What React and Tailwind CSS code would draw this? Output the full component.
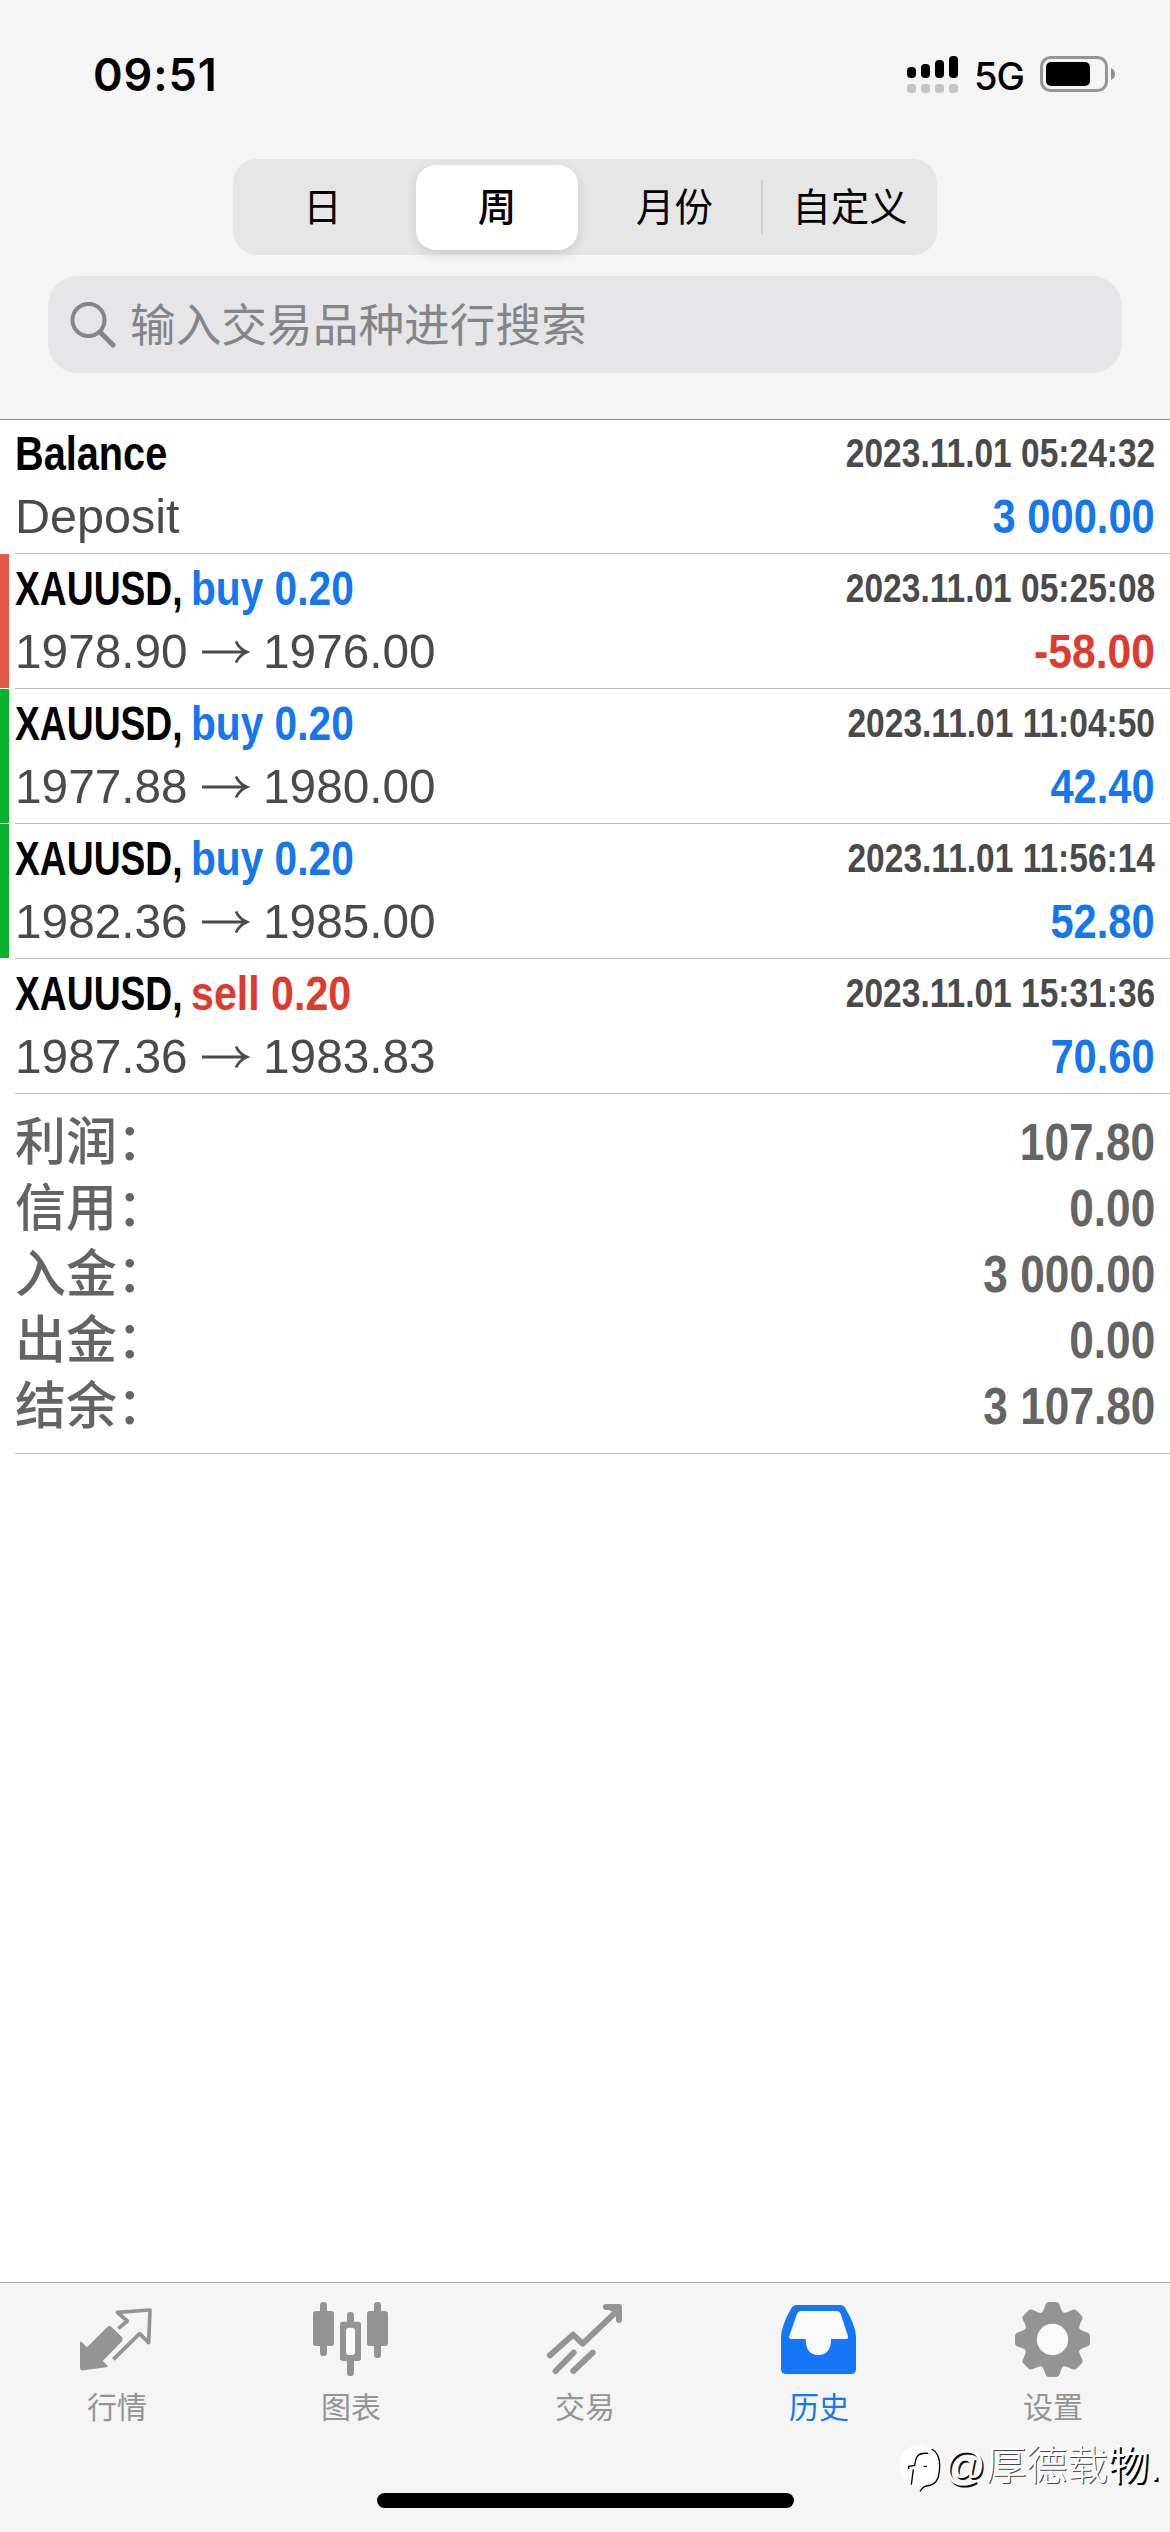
const TABS = ['日', '周', '月份', '自定义'];

const DEALS = [
  { symbol: 'Balance', symbolScale: 'scale-x-[0.81]', detail: 'Deposit', time: '2023.11.01 05:24:32', amount: '3 000.00' },
  { symbol: 'XAUUSD,', side: 'buy', volume: '0.20', open: '1978.90', close: '1976.00', time: '2023.11.01 05:25:08', amount: '-58.00', bar: 'bg-[#e2594c]' },
  { symbol: 'XAUUSD,', side: 'buy', volume: '0.20', open: '1977.88', close: '1980.00', time: '2023.11.01 11:04:50', amount: '42.40', bar: 'bg-[#0bb22d]' },
  { symbol: 'XAUUSD,', side: 'buy', volume: '0.20', open: '1982.36', close: '1985.00', time: '2023.11.01 11:56:14', amount: '52.80', bar: 'bg-[#0bb22d]' },
  { symbol: 'XAUUSD,', side: 'sell', volume: '0.20', open: '1987.36', close: '1983.83', time: '2023.11.01 15:31:36', amount: '70.60' },
];

const SUMMARY = [
  { label: '利润：', value: '107.80' },
  { label: '信用：', value: '0.00' },
  { label: '入金：', value: '3 000.00' },
  { label: '出金：', value: '0.00' },
  { label: '结余：', value: '3 107.80' },
];

const StatusBar = () => (
  <div className="flex h-[159px] items-start justify-between pl-[93px] pr-[53px] pt-[47px]">
    <span className="font-['Inter'] text-[45px] font-semibold leading-[55px] tracking-[0.9px]">09:51</span>
    <div className="flex items-start pt-[9px]">
      <svg className="h-[38px] w-[52px]" viewBox="0 0 52 38">
        <rect x="0" y="11" width="9" height="11" rx="4" />
        <rect x="14" y="8" width="9" height="14" rx="4" />
        <rect x="28" y="4" width="9" height="18" rx="4" />
        <rect x="42" y="0" width="9" height="22" rx="4" />
        {[0, 14, 28, 42].map((x) => (
          <rect key={x} x={x} y="28" width="9" height="9" rx="3" fill="#c4c4c4" />
        ))}
      </svg>
      <span className="ml-[15px] w-[66px] font-['Inter'] text-[38px] font-medium leading-[40px] tracking-[-1px]">5G</span>
      <svg className="h-[38px] w-[77px]" viewBox="0 0 77 38">
        <rect x="1.5" y="1.5" width="65" height="33" rx="9" fill="none" stroke="#959595" strokeWidth="3" />
        <rect x="6" y="6" width="44" height="24" rx="5" />
        <path d="M71 12q4 2 4 6t-4 6z" fill="#8e8e8e" />
      </svg>
    </div>
  </div>
);

const PeriodTabs = () => (
  <div className="mx-auto flex h-[96px] w-[704px] items-center rounded-[24px] bg-[#e6e6e7] text-[38.5px]">
    {TABS.map((tab, index) => (
      <div key={tab} className="flex h-full w-[176px] items-center justify-center">
        {index === 1 ? (
          <div className="flex h-[85px] w-[162px] items-center justify-center rounded-[20px] bg-white pt-[2px] font-medium shadow-[0_4px_12px_rgba(0,0,0,0.12)]">
            {tab}
          </div>
        ) : (
          <div
            className={
              index === 3
                ? 'flex h-[54px] w-full items-center justify-center border-l-2 border-[#d0d0d2] pt-[2px]'
                : 'flex h-[54px] items-center justify-center pt-[2px] pl-[3px]'
            }
          >
            {tab}
          </div>
        )}
      </div>
    ))}
  </div>
);

const SearchField = () => (
  <div className="mx-[48px] mt-[21px] flex h-[97px] items-center rounded-[30px] bg-[#e6e6e8] pl-[22px] text-[#858589]">
    <svg className="h-[46px] w-[46px]" viewBox="0 0 46 46" fill="none" stroke="currentColor" strokeWidth="4">
      <circle cx="18.5" cy="18" r="16" />
      <path d="M30 30l13 13" strokeWidth="5" strokeLinecap="round" />
    </svg>
    <span className="ml-[14px] pt-[5px] text-[45.7px] leading-[60px]">输入交易品种进行搜索</span>
  </div>
);

const DealRow = ({ deal }) => (
  <div className="flex h-[135px]">
    <div className="h-[134px] w-[15px]">
      {deal.bar && <div className={`h-full w-[9px] ${deal.bar}`} />}
    </div>
    <div className="flex-1 border-b border-[#bfbfc1] pt-[3px] pr-[15px] text-[49px] leading-[63px] text-[#4a4a4c]">
      <div className="flex h-[63px] justify-between whitespace-nowrap font-bold">
        <div className="flex">
          <span className="w-[176px] text-black">
            <span className={`inline-block origin-left ${deal.symbolScale || 'scale-x-[0.76]'}`}>{deal.symbol}</span>
          </span>
          {deal.side === 'buy' && (
            <span className="inline-block origin-left scale-x-[0.83] text-[#1577ee]">buy {deal.volume}</span>
          )}
          {deal.side === 'sell' && (
            <span className="inline-block origin-left scale-x-[0.84] text-[#dc3b2e]">sell {deal.volume}</span>
          )}
        </div>
        <span className="inline-block origin-right scale-x-[0.838] text-[40px]">{deal.time}</span>
      </div>
      <div className="flex h-[63px] justify-between whitespace-nowrap">
        {deal.detail ? (
          <span className="inline-block origin-left scale-x-[0.99]">{deal.detail}</span>
        ) : (
          <div className="flex items-center">
            <span className="w-[187px]">
              <span className="inline-block origin-left scale-x-[0.975]">{deal.open}</span>
            </span>
            <svg className="h-[24px] w-[61px]" viewBox="0 0 61 24" fill="none" stroke="currentColor" strokeWidth="2.8">
              <path d="M0 12h45M34 1.5q3 7 11 10.500q-8 3.500-11 10.500" />
            </svg>
            <span className="inline-block origin-left scale-x-[0.975]">{deal.close}</span>
          </div>
        )}
        <span
          className={`inline-block origin-right font-bold ${
            deal.amount.startsWith('-') ? 'scale-x-[0.87] text-[#dc3b2e]' : 'scale-x-[0.85] text-[#1577ee]'
          }`}
        >
          {deal.amount}
        </span>
      </div>
    </div>
  </div>
);

const Summary = () => (
  <div className="ml-[15px] h-[360px] border-b border-[#bfbfc1] pr-[15px] pt-[15px] font-bold text-[#646464]">
    {SUMMARY.map((row) => (
      <div key={row.label} className="flex h-[66px] items-center justify-between leading-[66px]">
        <span className="pt-[2px] text-[51px] font-medium">{row.label}</span>
        <span className="inline-block origin-right scale-x-[0.85] text-[52px]">{row.value}</span>
      </div>
    ))}
  </div>
);

const QuotesIcon = () => (
  <svg className="h-[78px] w-[78px]" viewBox="234 90 234 234" strokeLinejoin="round">
    <path
      d="M240 215l4 0 17 17 60-60q6-7 14-1l31 31q5 6 0 12l-58 59 13 12q5 5-3 7l-66 9q-12 2-12-6z"
      fill="currentColor"
    />
    <path d="M355 176l27-23-30-26 98-7-4 98-27-27-79 77" fill="none" stroke="currentColor" strokeWidth="11" />
  </svg>
);

const ChartIcon = () => (
  <svg className="h-[78px] w-[78px]" viewBox="936 90 234 234" fill="currentColor">
    <rect x="960" y="96" width="21" height="162" rx="10" />
    <rect x="939" y="123" width="63" height="105" rx="8" />
    <rect x="1122" y="96" width="21" height="168" rx="10" />
    <rect x="1101" y="123" width="63" height="105" rx="8" />
    <rect x="1041" y="126" width="21" height="192" rx="10" />
    <rect x="1020" y="155" width="63" height="118" rx="8" />
    <rect x="1038" y="173" width="27" height="82" rx="9" fill="#fafafa" />
  </svg>
);

const TradeIcon = () => (
  <svg className="h-[78px] w-[78px]" viewBox="288 90 234 234" fill="none" stroke="currentColor" strokeWidth="18" strokeLinecap="round" strokeLinejoin="round">
    <path d="M300 256l69-62 29 27 98-93" />
    <path d="M317 303l54-55M370 303l58-55" />
    <path d="M468 111h39v39" />
    <path d="M484 118h17v18" strokeWidth="12" />
  </svg>
);

const HistoryIcon = () => (
  <svg className="h-[78px] w-[78px]" viewBox="990 90 234 234">
    <path
      d="M1040 105h130q11 0 17 11 30 51 31 84v97q0 15-15 15h-195q-15 0-15-15v-97q2-35 30-84 6-11 17-11z"
      fill="currentColor"
    />
    <path
      d="M1053 123h105q11 0 15 11l21 65q2 8-6 8h-45q0 48-38 48t-38-48h-43q-9 0-6-9l22-64q4-11 13-11z"
      fill="#fafafa"
    />
  </svg>
);

const SettingsIcon = () => (
  <svg className="h-[78px] w-[78px]" viewBox="432 90 234 234">
    <g fill="currentColor">
      <circle cx="547.500" cy="208.500" r="87" />
      {[0, 45, 90, 135, 180, 225, 270, 315].map((angle) => (
        <path
          key={angle}
          d="M508 135q12-8 17-27 3-12 12-12h21q9 0 12 12 5 19 17 27z"
          transform={`rotate(${angle} 547.5 208.5)`}
        />
      ))}
    </g>
    <circle cx="547.500" cy="208.500" r="47" fill="#fafafa" />
  </svg>
);

const NAV = [
  { icon: QuotesIcon, label: '行情' },
  { icon: ChartIcon, label: '图表' },
  { icon: TradeIcon, label: '交易' },
  { icon: HistoryIcon, label: '历史', active: true },
  { icon: SettingsIcon, label: '设置' },
];

const BottomNav = () => (
  <nav className="relative flex h-[250px] flex-col items-center border-t border-[#a8a8aa] bg-[#f5f5f5]">
    <div className="flex w-full pt-[17px]">
      {NAV.map((item) => {
        const Icon = item.icon;
        return (
          <div
            key={item.label}
            className={`flex w-[234px] flex-col items-center ${item.active ? 'text-[#1577f5]' : 'text-[#949494]'}`}
          >
            <Icon />
            <span className="mt-[10px] text-[30px] leading-[40px]">{item.label}</span>
          </div>
        );
      })}
    </div>
    <div className="mt-[65px] h-[15px] w-[417px] rounded-full bg-black" />

    {/* Author mark over the corner */}
    <div className="absolute left-[899px] top-[157px] flex items-center">
      <svg className="h-[52px] w-[44px]" viewBox="0 0 132 156" fill="none" stroke="#000" strokeWidth="4">
        <ellipse cx="61" cy="75" rx="61" ry="60" fill="#fff" stroke="none" />
        <path d="M98 27q24 12 24 50 0 42-18 54-10 6-22 7-8 2-12 7l-7 9" />
        <path d="M88 40q-28-2-35 12-4 8-6 24l-18 3v8M43 88l-6 46M74 79h10" />
      </svg>
      <span className="ml-px whitespace-nowrap text-[41px] font-light leading-[50px] tracking-[-0.2px] text-white [text-shadow:1.500px_1.500px_0.500px_#111]">
        @<span className="[text-shadow:1px_1px_0.500px_#444]">厚德载</span>
        <span className="font-normal [text-shadow:2px_2px_0_#000]">物.</span>
      </span>
    </div>
  </nav>
);

export default function App() {
  return (
    <div className="flex h-[2532px] w-[1170px] flex-col overflow-hidden bg-white font-['Liberation_Sans','Noto_Sans_CJK_SC',sans-serif] text-black">
      <header className="h-[420px] border-b border-[#8e8e90] bg-[#f5f5f5]">
        <StatusBar />
        <PeriodTabs />
        <SearchField />
      </header>
      <main className="-mt-px flex-1">
        {DEALS.map((deal) => (
          <DealRow key={deal.time} deal={deal} />
        ))}
        <Summary />
      </main>
      <BottomNav />
    </div>
  );
}
